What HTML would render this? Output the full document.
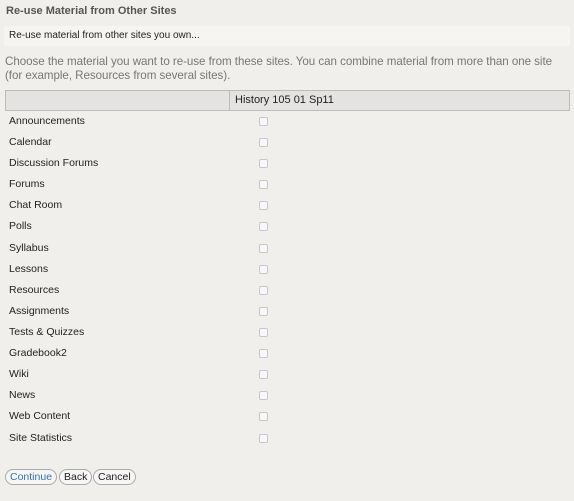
<!DOCTYPE html>
<html><head><style>
body{margin:0;width:574px;height:501px;background:#f1efeb;font-family:"Liberation Sans",sans-serif;position:relative;overflow:hidden}
.t{position:absolute;left:6px;top:5px;font-size:11px;font-weight:bold;color:#555}
.info{position:absolute;left:4px;top:26px;width:566px;height:20px;background:#f6f5f2;font-size:10px;color:#222;line-height:20px;text-indent:5px}
.p{position:absolute;left:5px;top:55px;font-size:11.6px;color:#777;line-height:14px;width:572px;letter-spacing:-0.05px}
.hd{position:absolute;left:5px;top:90px;width:563px;height:19px;background:#e4e3e1;border:1px solid #bdbcba}
.hd div{position:absolute;left:223px;top:0;height:19px;border-left:1px solid #bdbcba;font-size:11px;line-height:19px;padding-left:5px;color:#222}
.r{position:absolute;left:9px;font-size:10.5px;color:#222;height:14px;line-height:14px}
.c{position:absolute;left:259px;width:7px;height:7px;border:1px solid #c8c8c8;border-radius:2px;background:#f8f8f8}
.b{position:absolute;top:469px;height:14px;border:1px solid #aaa;border-radius:8px;background:#f6f6f6;font-size:10.5px;line-height:14px;padding:0 4px;color:#222}
</style></head><body>
<div class="t">Re-use Material from Other Sites</div>
<div class="info">Re-use material from other sites you own...</div>
<div class="p">Choose the material you want to re-use from these sites. You can combine material from more than one site<br>(for example, Resources from several sites).</div>
<div class="hd"><div>History 105 01 Sp11</div></div>
<div class="r" style="top:114px">Announcements</div><div class="c" style="top:117px"></div>
<div class="r" style="top:135px">Calendar</div><div class="c" style="top:138px"></div>
<div class="r" style="top:156px">Discussion Forums</div><div class="c" style="top:159px"></div>
<div class="r" style="top:177px">Forums</div><div class="c" style="top:180px"></div>
<div class="r" style="top:198px">Chat Room</div><div class="c" style="top:201px"></div>
<div class="r" style="top:219px">Polls</div><div class="c" style="top:222px"></div>
<div class="r" style="top:241px">Syllabus</div><div class="c" style="top:244px"></div>
<div class="r" style="top:262px">Lessons</div><div class="c" style="top:265px"></div>
<div class="r" style="top:283px">Resources</div><div class="c" style="top:286px"></div>
<div class="r" style="top:304px">Assignments</div><div class="c" style="top:307px"></div>
<div class="r" style="top:325px">Tests &amp; Quizzes</div><div class="c" style="top:328px"></div>
<div class="r" style="top:346px">Gradebook2</div><div class="c" style="top:349px"></div>
<div class="r" style="top:367px">Wiki</div><div class="c" style="top:370px"></div>
<div class="r" style="top:388px">News</div><div class="c" style="top:391px"></div>
<div class="r" style="top:409px">Web Content</div><div class="c" style="top:412px"></div>
<div class="r" style="top:431px">Site Statistics</div><div class="c" style="top:434px"></div>
<div class="b" style="left:5px;color:#3a6fb5">Continue</div>
<div class="b" style="left:59px">Back</div>
<div class="b" style="left:93px">Cancel</div>
</body></html>
